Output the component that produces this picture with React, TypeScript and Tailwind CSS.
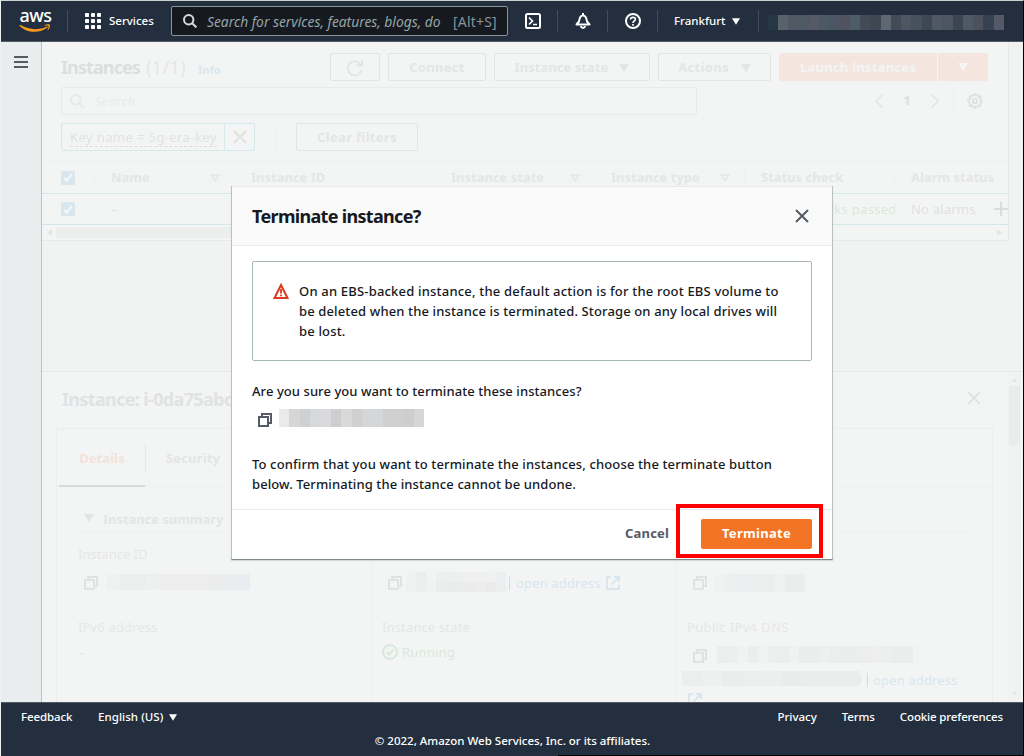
import type { ReactNode } from "react";

const NOTO = "font-['Noto_Sans',sans-serif]";

function Mosaic({ cells, className }: { cells: string[]; className: string }) {
  return (
    <div className={`flex shrink-0 ${className}`}>
      {cells.map((c, i) => (
        <div key={i} className={`flex-1 ${c}`} />
      ))}
    </div>
  );
}

function Caret({ className = "" }: { className?: string }) {
  return (
    <svg viewBox="0 0 10 8" className={`shrink-0 ${className}`} fill="currentColor">
      <path d="M0 0h10L5 8z" />
    </svg>
  );
}

function CopyIcon({ className = "" }: { className?: string }) {
  return (
    <svg viewBox="0 0 14 14" className={`size-3.5 shrink-0 ${className}`} fill="none" stroke="currentColor" strokeWidth="2">
      <path d="M1 4h9v9H1zM4 3.5V1h9v9h-2.5" />
    </svg>
  );
}

function ExternalIcon({ className = "" }: { className?: string }) {
  return (
    <svg viewBox="0 0 14 14" className={`size-3.5 shrink-0 ${className}`} fill="none" stroke="currentColor" strokeWidth="2">
      <path d="M5 1H1v12h12V9M8 1h5v5M13 1L5.5 8.5" />
    </svg>
  );
}

function SearchIcon({ className = "" }: { className?: string }) {
  return (
    <svg viewBox="0 0 14 14" className={`size-3.5 shrink-0 ${className}`} fill="none" stroke="currentColor" strokeWidth="2">
      <circle cx="5.7" cy="5.7" r="4.7" />
      <path d="M9.2 9.2L13.4 13.4" />
    </svg>
  );
}

function CloseIcon({ className = "" }: { className?: string }) {
  return (
    <svg viewBox="0 0 14 14" className={`size-3.5 shrink-0 ${className}`} fill="none" stroke="currentColor" strokeWidth="2">
      <path d="M1 1l12 12M13 1L1 13" />
    </svg>
  );
}

function Checkbox() {
  return (
    <div className="flex size-3.5 items-center justify-center rounded-xs bg-[#d9e6ee]">
      <svg viewBox="0 0 10 9" className="h-[9px] w-2.5" fill="none" stroke="#f5f8f9" strokeWidth="2">
        <path d="M1 4.8L3.8 7.5L9 1" />
      </svg>
    </div>
  );
}

function GhostButton({ children, className }: { children: ReactNode; className: string }) {
  return (
    <button
      className={`flex h-7 shrink-0 items-center justify-center rounded-xs border border-[#e2e5e5] pt-px font-bold text-[#e3e5e6] ${className}`}
    >
      {children}
    </button>
  );
}

function TopNav() {
  return (
    <header className="flex h-[41px] shrink-0 items-center border-b border-[#545b64] bg-[#232f3e] text-[11.5px] font-medium text-white">
      <div className="ml-[18px] flex w-8 flex-col items-center">
        <span className="mt-[-5px] ml-px h-[17px] text-[18px] leading-[20px] font-medium tracking-[-0.5px]">aws</span>
        <svg viewBox="0 0 32 9" className="mt-0.5 h-[9px] w-8">
          <path d="M.6 1.2C.8.8 1.200 .9 1.600 1.100C10 6.300 20 6.300 28 2.500c.7-.3 1.200.4.6.9C21 9.300 8 9.500.8 1.900z" fill="#f79a1e" />
          <path d="M25.500 1.300c1.500-1 4.700-1.200 5.300-.6c.5.8-.1 3.800-1.700 5.400c-.4.3-.7.1-.5-.3c.5-1.200 1.200-3.300.8-3.900c-.4-.5-2.500-.3-3.600-.1c-.5 0-.6-.3-.3-.5z" fill="#f79a1e" />
        </svg>
      </div>
      <div className="ml-4 h-[22px] w-px bg-[#414d5b]" />
      <svg viewBox="0 0 16 16" className="ml-[17px] size-4" fill="currentColor">
        {[0, 6, 12].map((y) =>
          [0, 6, 12].map((x) => <rect key={`${x}-${y}`} x={x} y={y} width="4" height="4" rx="0.8" />),
        )}
      </svg>
      <span className="ml-2 w-[45px] whitespace-nowrap">Services</span>
      <div className="ml-[17px] flex h-[30px] w-[337px] shrink-0 items-center rounded-xs border border-[#879596] bg-[#16191f] pt-px">
        <SearchIcon className="-mt-px ml-[11px] text-[#d5dbdb]" />
        <span className="ml-[10px] w-[236px] overflow-hidden text-[13.8px] leading-5 font-normal whitespace-nowrap text-[#95a5a6] italic">
          Search for services, features, blogs, do
        </span>
        <span className="ml-[10px] text-[14px] font-normal tracking-[0.2px] text-[#879596]">[Alt+S]</span>
      </div>
      <svg viewBox="0 0 16 16" className="ml-[17px] size-4 shrink-0" fill="none" stroke="currentColor" strokeWidth="2">
        <rect x="1" y="1" width="14" height="14" rx="1.500" />
        <path d="M4 4.500L7.500 8L4 11.500M8 11.500h4" strokeWidth="1.700" />
      </svg>
      <div className="ml-4 h-[22px] w-px bg-[#414d5b]" />
      <svg viewBox="0 0 16 16" className="ml-[17px] size-4 shrink-0" fill="none" stroke="currentColor" strokeWidth="2">
        <path d="M1.500 11.500h13L12 8.500C11.500 4.500 10.500 2.500 8 2.500S4.500 4.500 4 8.500z" strokeLinejoin="round" />
        <path d="M8 0v2.500M6 13c.3 2.500 3.700 2.500 4 0" />
      </svg>
      <div className="ml-4 h-[22px] w-px bg-[#414d5b]" />
      <svg viewBox="0 0 16 16" className="ml-[17px] size-4 shrink-0" fill="none" stroke="currentColor" strokeWidth="2">
        <circle cx="8" cy="8" r="7" />
        <path d="M5.500 6.500C5.600 3.600 10.400 3.600 10.400 6.300C10.400 8 8 7.800 8 10M8 11v1.800" strokeWidth="1.700" />
      </svg>
      <div className="ml-4 h-[22px] w-px bg-[#414d5b]" />
      <span className="ml-4 w-[52px] whitespace-nowrap">Frankfurt</span>
      <Caret className="ml-1.5 h-[7px] w-2" />
      <div className="ml-[18px] h-[22px] w-px bg-[#414d5b]" />
      <div className="mt-[3px] ml-[9px] h-[15px] w-2.5 bg-[#263645]" />
      <Mosaic
        className="mt-[3px] h-[15px] w-[226px]"
        cells={[
          "bg-[#59616b]", "bg-[#505963]", "bg-[#4f5964]", "bg-[#555a66]", "bg-[#4c5866]", "bg-[#4c5563]", "bg-[#50535f]", "bg-[#4e5b68]",
          "bg-[#424b56]", "bg-[#3f4753]", "bg-[#5d6873]", "bg-[#424b57]", "bg-[#4e5661]", "bg-[#47505d]", "bg-[#3c4855]", "bg-[#4f5863]",
          "bg-[#4c5561]", "bg-[#3c4652]", "bg-[#4d5965]", "bg-[#4d515e]", "bg-[#364252]", "bg-[#535966]",
        ]}
      />
    </header>
  );
}

function Toolbar() {
  return (
    <div className="flex flex-col pt-[11px] pl-[19px]">
      <div className="flex h-7 items-center">
        <div className="flex w-[269px] items-baseline whitespace-nowrap">
          <h1 className="w-[85px] text-[18px] leading-7 font-bold tracking-[-0.9px] text-[#dcdfdf]">Instances</h1>
          <span className="w-[52px] text-[18px] tracking-[0.4px] text-[#e3e5e5]">(1/1)</span>
          <span className="text-[11px] font-bold text-[#dae7ef]">Info</span>
        </div>
        <GhostButton className="w-[50px]">
          <svg viewBox="0 0 16 16" className="size-4" fill="none" stroke="currentColor" strokeWidth="2">
            <path d="M14.500 10A7 7 0 1 1 12.500 3.200L15 5.500M15 0v5.500H9.500" />
          </svg>
        </GhostButton>
        <GhostButton className="ml-2 w-[98px] tracking-[0.3px]">Connect</GhostButton>
        <GhostButton className="ml-2 w-[156px] gap-[11px] tracking-[0.05px]">
          Instance state
          <Caret className="h-2 w-2.5" />
        </GhostButton>
        <GhostButton className="ml-2 w-[113px] gap-3 tracking-[0.3px]">
          Actions
          <Caret className="h-2 w-2.5" />
        </GhostButton>
        <button className="ml-2 h-7 w-[158px] shrink-0 rounded-l-xs bg-[#f4e6df] pt-px font-bold tracking-[0.25px] whitespace-nowrap text-[#f3f4f4]">
          Launch instances
        </button>
        <button className="ml-px flex h-7 w-[50px] shrink-0 items-center justify-center rounded-r-xs bg-[#f4e6df] text-[#f4f6f6]">
          <Caret className="h-2 w-2.5" />
        </button>
      </div>
      <div className="mt-1.5 flex h-7 items-center">
        <div className="flex h-7 w-[636px] items-center rounded-xs border border-[#e9ebeb] text-[#e6e9e9]">
          <SearchIcon className="ml-2" />
          <span className="mt-0.5 ml-[11px] tracking-[0.3px] text-[#e9ebeb] italic">Search</span>
        </div>
        <svg viewBox="0 0 8 14" className="ml-[178px] h-3.5 w-2" fill="none" stroke="#e3e6e6" strokeWidth="1.600">
          <path d="M7.500 .5L1 7l6.500 6.500" />
        </svg>
        <span className="ml-[20px] w-2 text-center font-bold text-[#dcdfdf]">1</span>
        <svg viewBox="0 0 8 14" className="ml-[20px] h-3.5 w-2" fill="none" stroke="#e3e6e6" strokeWidth="1.600">
          <path d="M.5 .5L7 7L.5 13.500" />
        </svg>
        <div className="ml-[14px] h-7 w-px bg-[#eff1f1]" />
        <svg viewBox="0 0 16 16" className="ml-[13px] size-4" fill="none" stroke="#dfe2e2" strokeWidth="1.800">
          <circle cx="8" cy="8" r="2.200" />
          <circle cx="8" cy="8" r="6" />
          <circle cx="8" cy="8" r="7.200" strokeWidth="1.500" strokeDasharray="3 2.655" strokeDashoffset="1.500" />
        </svg>
      </div>
      <div className="mt-2 flex h-7 items-center">
        <div className="flex h-7 w-[194px] items-center rounded-xs border border-[#d6e8ec]">
          <div className="flex h-full w-[163px] items-center border-r border-[#d6e8ec] pl-2">
            <span className="mt-0.5 border-b border-dashed border-[#dbdede] leading-[17px] tracking-[0.4px] whitespace-nowrap text-[#e1e3e4]">
              Key name = 5g-era-key
            </span>
          </div>
          <CloseIcon className="ml-2 text-[#dfe2e2]" />
        </div>
        <div className="ml-5 h-7 w-px bg-[#eff1f1]" />
        <GhostButton className="ml-5 w-[122px] tracking-[0.35px]">Clear filters</GhostButton>
      </div>
    </div>
  );
}

function HeadCell({ label, width, sort }: { label: string; width: string; sort?: boolean }) {
  return (
    <div className={`flex h-4 shrink-0 items-center border-l border-[#eff1f1] pl-4 ${width}`}>
      <span className="whitespace-nowrap">{label}</span>
      {sort && (
        <svg viewBox="0 0 10 8" className="mr-[14px] ml-auto h-2 w-2.5" fill="none" stroke="currentColor" strokeWidth="1.700">
          <path d="M1.300 1h7.400L5 6.500z" />
        </svg>
      )}
    </div>
  );
}

function InstancesTable() {
  return (
    <div className="mt-[10px] border-t border-[#eff1f1]">
      <div className="flex h-[31px] items-center font-bold text-[#e4e6e7]">
        <div className="w-[52px] pl-[19px]">
          <Checkbox />
        </div>
        <HeadCell label="Name" width="w-[140px]" sort />
        <HeadCell label="Instance ID" width="w-[200px]" />
        <HeadCell label="Instance state" width="w-[160px]" sort />
        <HeadCell label="Instance type" width="w-[150px]" sort />
        <HeadCell label="Status check" width="w-[150px]" />
        <HeadCell label="Alarm status" width="w-[114px]" />
      </div>
      <div className="flex h-8 items-center border-y border-[#d3e6ea] text-[#dfe1e2]">
        <div className="w-[69px] pl-[19px]">
          <Checkbox />
        </div>
        <span className="mt-px w-[650px]">–</span>
        <div className="mt-0.5 flex w-[134px] items-center gap-1 overflow-hidden whitespace-nowrap text-[#dbe8dd]">
          <svg viewBox="0 0 16 16" className="size-4 shrink-0" fill="none" stroke="currentColor" strokeWidth="2">
            <circle cx="8" cy="8" r="7" />
          </svg>
          <span className="tracking-[0.3px]">2/2 checks passed</span>
        </div>
        <span className="mt-0.5 ml-4 w-[83px] tracking-[0.2px]">No alarms</span>
        <svg viewBox="0 0 14 14" className="h-3.5 w-3.5" fill="none" stroke="#dadddd" strokeWidth="2">
          <path d="M7 0v14M0 7h14" />
        </svg>
      </div>
      <div className="flex h-[15px] items-center px-1 text-[#e1e4e4]">
        <Caret className="h-[5px] w-[7px] rotate-90" />
        <div className="ml-[3px] h-[11px] w-[560px] bg-[#eceeed]" />
        <Caret className="mr-px ml-auto h-[5px] w-[7px] -rotate-90" />
      </div>
    </div>
  );
}

function OpenAddress() {
  return <span className="tracking-[0.15px] whitespace-nowrap text-[#d9e6ee]">open address</span>;
}

function DetailsPanel() {
  return (
    <section className="flex h-[331px] border-t border-[#e8eaea] bg-[#f3f5f4]">
      <div className="ml-[14px] flex w-[937px] flex-col">
        <div className="flex h-14 items-center justify-between pr-3 pb-0.5 pl-1.5">
          <h2 className="text-[18px] font-bold tracking-[-0.65px] whitespace-nowrap text-[#e0e2e3]">Instance: i-0da75abc</h2>
          <CloseIcon className="mb-0.5 text-[#e1e4e4]" />
        </div>
        <div className="flex-1 overflow-hidden border-x border-t border-[#eceeee]">
          <div className="ml-0.5 flex h-[58px] items-start border-b border-[#eff1f1] font-bold text-[#e3e5e6]">
            <div className="flex h-[58px] w-[86px] items-center justify-center border-b-2 border-[#d8dbdb] pt-1 tracking-[0.1px] text-[#f4e2d9]">
              Details
            </div>
            <div className="mt-3.5 flex h-[30px] items-center border-l border-[#e4e7e7] pt-0.5 pl-5 tracking-[0.15px]">Security</div>
          </div>
          <div className="mr-[21px] ml-[21px] flex h-[46px] items-end border-b border-[#eff1f1] pb-[3px]">
            <Caret className="mb-[7px] ml-[6px] h-2 w-2.5 text-[#e0e3e3]" />
            <span className="ml-[9px] leading-5 font-bold tracking-[-0.05px] text-[#e3e5e6]">Instance summary</span>
          </div>
          <div className="ml-[21px] flex h-[180px] text-[#e5e7e7]">
            <div className="w-[294px] shrink-0 pt-[11px] leading-5">
              <div>Instance ID</div>
              <div className="mt-[9px] flex h-5 items-center">
                <CopyIcon className="ml-[6px] text-[#e0e3e3]" />
                <Mosaic
                  className="mb-0.5 ml-[9px] h-4 w-[143px]"
                  cells={["bg-[#eff1f1]", "bg-[#eceeee]", "bg-[#eceeee]", "bg-[#eef0f0]", "bg-[#ecedec]", "bg-[#ecedec]", "bg-[#ecedec]", "bg-[#ecedec]", "bg-[#ebecee]", "bg-[#ebecef]", "bg-[#ebecf0]"]}
                />
              </div>
              <div className="mt-6 tracking-[0.15px]">IPv6 address</div>
              <div className="mt-[5px]">–</div>
            </div>
            <div className="w-[304px] shrink-0 border-l border-[#eff1f1] pt-[11px] pl-[9px] leading-5">
              <div>Public IPv4 address</div>
              <div className="mt-[9px] flex h-5 items-center">
                <CopyIcon className="ml-[6px] text-[#e0e3e3]" />
                <div className="mb-0.5 ml-1 flex w-[100px] flex-col">
                  <Mosaic
                    className="h-2.5"
                    cells={["bg-[#f0f2f1]", "bg-[#eceeed]", "bg-[#f2f4f3]", "bg-[#edefee]", "bg-[#edefee]", "bg-[#eef0ef]", "bg-[#eff0ef]", "bg-[#eeefee]", "bg-[#f0f1f1]", "bg-[#eceef2]"]}
                  />
                  <Mosaic
                    className="h-2.5"
                    cells={["bg-[#eff1f0]", "bg-[#edefee]", "bg-[#f0f2f1]", "bg-[#ebedec]", "bg-[#eaeceb]", "bg-[#ebedec]", "bg-[#eaeceb]", "bg-[#ecedec]", "bg-[#e9ebea]", "bg-[#eceeed]"]}
                  />
                </div>
                <span className="ml-[3px] h-3.5 w-px bg-[#d8dbdb]" />
                <span className="ml-[6px]">
                  <OpenAddress />
                </span>
                <ExternalIcon className="ml-[5px] text-[#d9e6ee]" />
              </div>
              <div className="mt-6 tracking-[0.15px]">Instance state</div>
              <div className="mt-[5px] flex items-center gap-1 text-[#d9e8dc]">
                <svg viewBox="0 0 16 16" className="size-4 shrink-0" fill="none" stroke="currentColor" strokeWidth="2">
                  <circle cx="8" cy="8" r="7" />
                  <path d="M4.500 8l2.500 2.500L11.500 6" />
                </svg>
                <span className="tracking-[0.2px]">Running</span>
              </div>
            </div>
            <div className="w-[304px] shrink-0 border-l border-[#eff1f1] pt-[11px] pl-[10px] leading-5">
              <div>Private IPv4 addresses</div>
              <div className="mt-[9px] flex h-5 items-center">
                <CopyIcon className="ml-[6px] text-[#e0e3e3]" />
                <Mosaic
                  className="ml-[7px] h-[18px] w-[101px]"
                  cells={["bg-[#f1f3f2]", "bg-[#eeefef]", "bg-[#edeeef]", "bg-[#eceef0]", "bg-[#edeeee]", "bg-[#eceeed]", "bg-[#eff1f1]", "bg-[#ebeded]", "bg-[#eceeee]", "bg-[#f2f4f3]"]}
                />
              </div>
              <div className="mt-6 tracking-[0.35px]">Public IPv4 DNS</div>
              <div className="mt-[8px] flex h-5 items-center">
                <CopyIcon className="mt-px ml-[6px] text-[#e0e3e3]" />
                <Mosaic
                  className="mb-0.5 ml-[10px] h-[17px] w-[206px]"
                  cells={["bg-[#eceeed]", "bg-[#edefee]", "bg-[#f1f3f2]", "bg-[#eceeed]", "bg-[#f1f3f2]", "bg-[#edefee]", "bg-[#eceeed]", "bg-[#f0f2f1]", "bg-[#ebedec]", "bg-[#eceeed]", "bg-[#eef0ef]", "bg-[#eceeed]", "bg-[#ebedec]", "bg-[#ecedef]", "bg-[#eceeed]", "bg-[#eeefee]", "bg-[#edefee]", "bg-[#ebedec]", "bg-[#ebedec]", "bg-[#f2f4f3]"]}
                />
              </div>
              <div className="mt-[5px] -ml-[5px] flex h-5 items-center">
                <Mosaic
                  className="mb-1 h-[15px] w-[178px]"
                  cells={["bg-[#eceeee]", "bg-[#eeefef]", "bg-[#ebeded]", "bg-[#eceeee]", "bg-[#edeeee]", "bg-[#eaecec]", "bg-[#ebeded]", "bg-[#ebeded]", "bg-[#ebeded]"]}
                />
                <span className="h-1.5 w-px bg-[#e1e4e4]" />
                <span className="ml-[6px] h-3.5 w-px bg-[#d8dbdb]" />
                <span className="ml-[5px]">
                  <OpenAddress />
                </span>
              </div>
              <ExternalIcon className="mt-[3px] ml-px text-[#d9e6ee]" />
            </div>
          </div>
        </div>
      </div>
      <div className="ml-[14px] flex w-[14px] flex-col items-center justify-between bg-[#f1f3f3] pt-[6px] pb-[6px] text-[#e3e5e5]">
        <Caret className="h-1 w-[7px] rotate-180" />
        <div className="mt-1 h-[59px] w-[11px] bg-[#eaeceb]" />
        <Caret className="mt-auto h-1 w-[7px]" />
      </div>
    </section>
  );
}

function TerminateDialog() {
  return (
    <div role="dialog" className="absolute top-[185px] left-[230px] flex h-[374px] w-[602px] flex-col border-x border-b border-x-[#b9c2c2] border-b-[#7d898a] bg-white font-medium text-[#16191f] shadow-[0_1px_1px_#d5dada]">
      <div className="flex h-[60px] items-center justify-between border-y border-t-[#e6eaea] border-b-[#eaeded] bg-[#fafafa] pr-[23px] pl-5">
        <h2 className="text-[18px] font-bold tracking-[-0.68px]">Terminate instance?</h2>
        <CloseIcon className="text-[#545b64]" />
      </div>
      <div className="flex-1 px-5 pt-[15px] leading-5">
        <div className="flex h-[100px] rounded-xs border border-[#aab7b8] pt-[19px] pl-5">
          <svg viewBox="0 0 16 16" className="mt-0.5 size-4 shrink-0" fill="none" stroke="#d93a20" strokeWidth="2">
            <path d="M8 2L14.500 15H1.500z" />
            <path d="M8 6v4.500M8 11.500v1.800" strokeWidth="1.800" />
          </svg>
          <p className="ml-[10px] tracking-[0.16px] whitespace-nowrap">
            <span className="tracking-[0.19px]">On an EBS-backed instance, the default action is for the root EBS volume to</span>
            <br />
            <span className="tracking-[0.135px]">be deleted when the instance is terminated. Storage on any local drives will</span>
            <br />
            be lost.
          </p>
        </div>
        <p className="mt-5 tracking-[0.07px]">Are you sure you want to terminate these instances?</p>
        <div className="mt-2 flex items-start">
          <CopyIcon className="mt-1 ml-[6px] text-[#545b64]" />
          <Mosaic
            className="ml-[7px] h-[18px] w-[145px]"
            cells={["bg-[#eaeaea]", "bg-[#d6d6d6]", "bg-[#cfd0d2]", "bg-[#d7d8da]", "bg-[#d9dade]", "bg-[#cecece]", "bg-[#d9d9d9]", "bg-[#d0d0d0]", "bg-[#d5d6d8]", "bg-[#d5d6d9]", "bg-[#cfcfcf]", "bg-[#d0d0d0]", "bg-[#ccced0]", "bg-[#d5d6d8]"]}
          />
        </div>
        <p className="mt-[27px] tracking-[0.135px] whitespace-nowrap">
          To confirm that you want to terminate the instances, choose the terminate button
          <br />
          <span className="tracking-[0.1px]">below. Terminating the instance cannot be undone.</span>
        </p>
      </div>
      <div className="flex h-[50px] shrink-0 items-center justify-end border-t border-[#eaeded] pr-5 pb-px font-bold">
        <button className="mr-8 w-[44px] tracking-[0.2px] text-[#545b64]">Cancel</button>
        <button className="h-[30px] w-[111px] rounded-xs bg-[#f27424] tracking-[0.3px] text-white">Terminate</button>
      </div>
      <div className="absolute top-[318px] left-[444px] h-[54px] w-[147px] border-4 border-[#ff0000]" />
    </div>
  );
}

function Footer() {
  return (
    <footer className="flex h-[54px] shrink-0 flex-col border-t border-[#545b64] bg-[#232f3e] pt-1 text-[11.5px] leading-5 font-medium text-white">
      <div className="flex items-center pr-5 pl-5 whitespace-nowrap">
        <span className="w-[77px] tracking-[-0.1px]">Feedback</span>
        <span className="tracking-[0.05px]">English (US)</span>
        <Caret className="ml-[6px] h-[7px] w-2" />
        <span className="ml-auto">Privacy</span>
        <span className="ml-[25px] tracking-[-0.1px]">Terms</span>
        <span className="ml-[25px] tracking-[-0.15px]">Cookie preferences</span>
      </div>
      <div className="mt-1 pl-px text-center">© 2022, Amazon Web Services, Inc. or its affiliates.</div>
      <div className="mt-auto h-px w-[465px] self-end bg-black" />
    </footer>
  );
}

export default function App() {
  return (
    <div
      className={`relative flex h-[756px] w-[1024px] flex-col overflow-hidden border-t border-r border-l border-t-[#ccd3d3] border-r-black border-l-[#eef1f1] bg-[#232f3e] text-[13px] ${NOTO}`}
    >
      <TopNav />
      <div className="flex h-[660px] shrink-0">
        <aside className="w-[41px] shrink-0 border-r border-[#bcc4c4] bg-[#e9eded] pt-[14px] pl-[13px]">
          <svg viewBox="0 0 14 12" className="h-3 w-3.5" fill="#545b64">
            <path d="M0 0h14v2H0zM0 5h14v2H0zM0 10h14v2H0z" />
          </svg>
        </aside>
        <main className="flex w-[981px] flex-col justify-between bg-[#f1f3f2]">
          <div className="h-[199px] w-[967px] overflow-hidden border-r border-b border-[#e6e9e9] bg-[#f3f5f4]">
            <Toolbar />
            <InstancesTable />
          </div>
          <DetailsPanel />
        </main>
      </div>
      <Footer />
      <TerminateDialog />
    </div>
  );
}
